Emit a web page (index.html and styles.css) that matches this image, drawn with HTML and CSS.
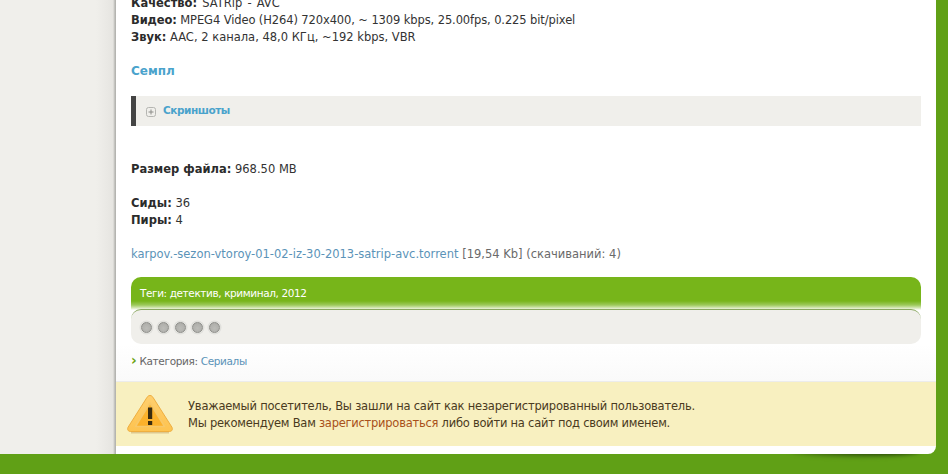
FILE: index.html
```html
<!DOCTYPE html>
<html lang="ru">
<head>
<meta charset="utf-8">
<title>Карпов</title>
<link rel="stylesheet" href="styles.css">
</head>
<body>
<div class="top">
  <div class="side"></div>
  <main class="page">
    <div class="body">
      <div class="line wide"><b>Качество:</b> SATRip - AVC</div>
      <div class="line tight"><b>Видео:</b> MPEG4 Video (H264) 720x400, ~ 1309 kbps, 25.00fps, 0.225 bit/pixel</div>
      <div class="line"><b>Звук:</b> AAC, 2 канала, 48,0 КГц, ~192 kbps, VBR</div>
      <div class="line gap"><a class="sample" href="#">Семпл</a></div>
      <div class="spoiler">
        <svg class="plus" width="10" height="10" viewBox="0 0 10 10"><rect x="0.5" y="0.5" width="9" height="9" rx="2" fill="none" stroke="#b5b5b1"/><path d="M2.5 5h5M5 2.5v5" stroke="#8c8c88" fill="none"/></svg>
        <a href="#">Скриншоты</a>
      </div>
      <div class="line size"><b>Размер файла:</b> 968.50 MB</div>
      <div class="line gap"><b>Сиды:</b> 36</div>
      <div class="line"><b>Пиры:</b> 4</div>
      <div class="line gap"><a class="file" href="#">karpov.-sezon-vtoroy-01-02-iz-30-2013-satrip-avc.torrent</a> <span class="muted">[19,54 Kb] (скачиваний: 4)</span></div>
    </div>
    <div class="tagbox">
      <div class="tags">Теги: детектив, криминал, 2012</div>
      <div class="rating">
        <i class="dot"></i><i class="dot"></i><i class="dot"></i><i class="dot"></i><i class="dot"></i>
      </div>
    </div>
    <div class="cat"><span class="chev">›</span> Категория: <a href="#">Сериалы</a></div>
    <div class="notice">
      <svg class="warn" width="48" height="42" viewBox="0 0 48 42">
        <defs>
          <linearGradient id="g" x1="0" y1="0" x2="0" y2="1"><stop offset="0" stop-color="#ffcf6e"/><stop offset="1" stop-color="#fdc350"/></linearGradient>
          <linearGradient id="h" x1="0" y1="0" x2="0" y2="1"><stop offset="0" stop-color="#fdb52f"/><stop offset="1" stop-color="#fbb02a"/></linearGradient>
        </defs>
        <path d="M5 39.500h38" stroke="#c9a866" stroke-width="2" opacity=".55"/>
        <path d="M24 2.500c1.400 0 2.400.8 3.200 2.200L45.800 34c1.300 2.300.3 4.500-2.500 4.500H4.700c-2.800 0-3.800-2.200-2.500-4.500L20.800 4.700C21.600 3.300 22.600 2.500 24 2.500z" fill="url(#g)" stroke="#eeae40" stroke-width="1"/>
        <path d="M24 10 38.500 33.500H9.500z" fill="url(#h)" stroke="#f8c868" stroke-width="1.500" stroke-linejoin="round"/>
        <path d="M22 14.500h4.200v11.500H22zM22 28h4.200v4H22z" fill="#3a2c10"/>
      </svg>
      <div class="msg">
        <div>Уважаемый посетитель, Вы зашли на сайт как незарегистрированный пользователь.</div>
        <div class="second">Мы рекомендуем Вам <a href="#">зарегистрироваться</a> либо войти на сайт под своим именем.</div>
      </div>
    </div>
  </main>
</div>
<footer class="foot"><div class="shadow"></div></footer>
</body>
</html>
```
FILE: styles.css
```css
html, body {
  margin: 0;
  padding: 0;
  height: 474px;
  overflow: hidden;
  background: #60a016;
  font-family: "DejaVu Sans", Verdana, sans-serif;
  font-size: 11.5px;
  color: #333;
}
a { text-decoration: none; }
.top {
  display: flex;
  height: 454px;
  overflow: hidden;
}
.side {
  width: 116px;
  flex: none;
  background: linear-gradient(to right, #f0efeb 96px, #e6e5e1 113px, #b9b9b5 115px, #b0b0ac 116px);
}
.page {
  width: 820px;
  height: 454px;
  flex: none;
  background: #fff;
  border-bottom-right-radius: 8px;
  overflow: hidden;
  display: flex;
  flex-direction: column;
}
.body {
  padding: 0 15px;
  margin-top: -5px;
  flex: none;
}
.line { line-height: 17px; height: 17px; white-space: nowrap; }
.line b { color: #2b2b2b; }
.wide { word-spacing: 1.5px; }
.tight { letter-spacing: -0.11px; }
.gap { margin-top: 17px; }
.sample { color: #4aa3cc; font-weight: bold; font-size: 12px; }
.spoiler {
  margin-top: 16px;
  height: 30px;
  background: #f0efeb;
  border-left: 5px solid #444;
  display: flex;
  align-items: center;
  padding-left: 10px;
  gap: 7px;
  padding-bottom: 2px;
  box-sizing: border-box;
  font-size: 10.5px;
  font-weight: bold;
  letter-spacing: -0.45px;
}
.spoiler a { color: #4aa3cc; }
.plus { flex: none; margin-top: 4px; }
.size { margin-top: 35px; }
.file { color: #5b93b8; }
.muted { color: #6a6a6a; }
.tagbox {
  margin: 14px 15px 0;
  height: 67px;
  border-radius: 10px;
  background: linear-gradient(to bottom, #77b51a 0, #77b51a 24px, #9cc95a 28px, #d6e8b8 31px, #fff 33px);
  display: flex;
  flex-direction: column;
  flex: none;
}
.tags {
  height: 32px;
  line-height: 32px;
  padding-left: 9px;
  color: #fff;
  font-size: 10.5px;
  letter-spacing: -0.4px;
  flex: none;
}
.rating {
  height: 35px;
  background: #f0efeb;
  border-radius: 10px;
  border-top: 1px solid #8aa860;
  box-sizing: border-box;
  display: flex;
  align-items: center;
  gap: 5px;
  padding-left: 10px;
}
.dot {
  width: 11px;
  height: 11px;
  box-sizing: border-box;
  border-radius: 50%;
  background: radial-gradient(circle at 50% 60%, #bcbcb8, #aaaaa6);
  border: 1px solid #8e8e8a;
  box-shadow: 0 0 0 1.5px #e0e0dc;
  margin-right: 1px;
}
.cat {
  height: 37px;
  background: linear-gradient(to bottom, #fff, #fafafa);
  padding: 9px 0 0 15px;
  box-sizing: border-box;
  font-size: 10.5px;
  letter-spacing: -0.35px;
  color: #666;
  flex: none;
  line-height: 17px;
}
.cat a { color: #5b93b8; }
.chev { color: #6ba312; font-weight: bold; font-size: 14px; line-height: 10px; }
.notice {
  height: 64px;
  background: #f8f0c0;
  border-top: 1px solid #ececec;
  display: flex;
  align-items: center;
  padding-left: 10px;
  gap: 14px;
  flex: none;
  color: #4a3a20;
  letter-spacing: -0.2px;
}
.warn { flex: none; }
.msg { line-height: 17px; padding-top: 2px; }
.second { letter-spacing: -0.25px; }
.msg a { color: #a8501a; }
.foot {
  height: 20px;
  position: relative;
  overflow: hidden;
}
.shadow {
  position: absolute;
  left: 790px;
  top: -9px;
  width: 130px;
  height: 12px;
  border-radius: 50%;
  background: radial-gradient(ellipse at 75% 50%, #1c3505 0, #2f5209 35%, #4d8012 70%, transparent 100%);
  filter: blur(2px);
}
```
